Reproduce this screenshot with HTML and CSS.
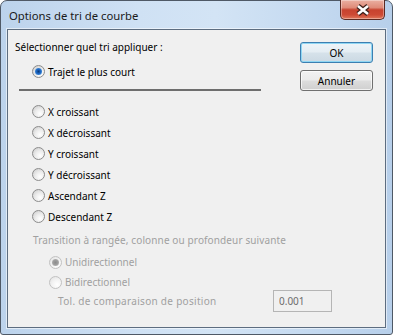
FILE: index.html
```html
<!DOCTYPE html>
<html lang="fr">

<head>
    <meta charset="UTF-8">
    <meta name="viewport" content="width=device-width, initial-scale=1.0">
    <title>Options de tri de courbe</title>
    <link rel="stylesheet" href="styles.css">
</head>

<body>

    <div class="window">
        <!-- Title Bar -->
        <div class="titlebar">
            <span class="title">Options de tri de courbe</span>
            <button class="close-btn" aria-label="Fermer">
                <svg width="16" height="12" viewBox="0 0 16 12">
                    <path d="M3 2 L13 10 M13 2 L3 10" stroke="#3b1f1a" stroke-width="5" />
                    <path d="M3 2 L13 10 M13 2 L3 10" stroke="#ffffff" stroke-width="2.6" />
                </svg>
            </button>
        </div>

        <!-- Dialog Body -->
        <div class="client">
            <div class="top">
                <div class="top-left">
                    <div class="heading">Sélectionner quel tri appliquer :</div>
                    <label class="row opt trajet"><span class="radio checked"></span>Trajet le plus court</label>
                    <div class="sep"></div>
                </div>
                <div class="buttons">
                    <button class="btn default">OK</button>
                    <button class="btn">Annuler</button>
                </div>
            </div>

            <div class="options">
                <label class="row opt"><span class="radio"></span>X croissant</label>
                <label class="row opt"><span class="radio"></span>X décroissant</label>
                <label class="row opt"><span class="radio"></span>Y croissant</label>
                <label class="row opt"><span class="radio"></span>Y décroissant</label>
                <label class="row opt"><span class="radio"></span>Ascendant Z</label>
                <label class="row opt"><span class="radio"></span>Descendant Z</label>
            </div>

            <div class="row transition disabled">Transition à rangée, colonne ou profondeur suivante</div>
            <label class="row sub uni disabled"><span class="radio checked"></span>Unidirectionnel</label>
            <label class="row sub bi disabled"><span class="radio"></span>Bidirectionnel</label>
            <div class="row tol disabled">
                <span class="tol-label">Tol. de comparaison de position</span>
                <input class="tol-input" type="text" value="0.001" disabled>
            </div>
        </div>
    </div>

</body>

</html>
```
FILE: styles.css
```css
/* General Styles */
body {
    margin: 0;
    padding: 0;
    font-family: "Noto Sans", sans-serif;
    font-size: 10px;
    color: #000;
}

/* Window Frame */
.window {
    width: 393px;
    height: 335px;
    box-sizing: border-box;
    border: 1px solid #4f5966;
    border-radius: 7px 7px 3px 3px;
    background: linear-gradient(to right, #bcd3ec 0%, #cfe1f4 35%, #d3e4f5 55%, #c1d7ef 85%, #b7cfea 100%);
    display: flex;
    flex-direction: column;
}

.titlebar {
    height: 28px;
    display: flex;
    align-items: center;
    padding-left: 8px;
    flex: none;
}

.title {
    font-size: 11.3px;
    color: #1a1a1a;
}

.close-btn {
    align-self: flex-start;
    margin: -1px 7px 0 auto;
    width: 45px;
    height: 20px;
    padding: 0;
    border: 1px solid #5b2a22;
    border-top: none;
    border-radius: 0 0 5px 5px;
    background: linear-gradient(#eab0a2 0%, #df8b79 40%, #c7432f 52%, #cd4a35 78%, #e0785c 100%);
    box-shadow: inset 0 0 0 1px rgba(255, 255, 255, 0.35);
    display: flex;
    align-items: center;
    justify-content: center;
}

/* Client Area */
.client {
    flex: 1;
    margin: 0 6px 6px 6px;
    border: 1px solid #5d6d80;
    box-shadow: 0 0 0 1px rgba(255, 255, 255, 0.55);
    background-color: #f0f0f0;
    padding: 7px 0 0 7px;
}

.top {
    display: flex;
    justify-content: space-between;
    padding-right: 12px;
}

.heading {
    height: 20px;
    display: flex;
    align-items: center;
}

.row {
    height: 21px;
    display: flex;
    align-items: center;
}

.opt {
    padding-left: 17px;
}

.trajet {
    margin-top: 4px;
}

.sep {
    margin: 7px 0 0 4px;
    width: 242px;
    height: 2px;
    background-color: #6e6e6e;
}

/* Buttons */
.buttons {
    display: flex;
    flex-direction: column;
    gap: 7px;
    margin-top: 5px;
}

.btn {
    width: 73px;
    height: 21px;
    padding: 0;
    font-family: "Noto Sans", sans-serif;
    font-size: 10px;
    color: #000;
    border: 1px solid #707070;
    border-radius: 3px;
    background: linear-gradient(#f2f2f2 0%, #ebebeb 48%, #dddddd 52%, #cfcfcf 100%);
    box-shadow: inset 0 0 0 1px rgba(255, 255, 255, 0.7);
}

.btn.default {
    border-color: #3c7fb1;
    background: linear-gradient(#eef4f8 0%, #e4edf3 48%, #d6e2ea 52%, #cbd9e3 100%);
    box-shadow: inset 0 0 0 1px #8fd6f3;
}

/* Options */
.options {
    margin-top: 10px;
}

.radio {
    width: 13px;
    height: 13px;
    box-sizing: border-box;
    border-radius: 50%;
    border: 1px solid #8c8c8c;
    background: radial-gradient(circle at 65% 70%, #ffffff 0%, #ececec 45%, #c8c8c8 100%);
    margin-right: 3px;
    position: relative;
    flex: none;
}

.radio.checked::after {
    content: "";
    position: absolute;
    top: 2px;
    left: 2px;
    width: 7px;
    height: 7px;
    border-radius: 50%;
    background: radial-gradient(circle at 50% 50%, #0b3b78 0%, #1a62bf 40%, #62acea 100%);
}

.disabled {
    color: #a0a0a0;
}

.disabled .radio {
    border-color: #c2c2c2;
    background: radial-gradient(circle at 65% 70%, #ffffff 0%, #f2f2f2 50%, #dedede 100%);
}

.disabled .radio.checked::after {
    background: radial-gradient(circle at 50% 50%, #8c8c8c 0%, #9d9d9d 45%, #c6c6c6 100%);
}

.transition {
    margin-top: 2px;
    padding-left: 18px;
    letter-spacing: 0.12px;
}

.sub {
    height: 20px;
    padding-left: 34px;
}

.uni {
    margin-top: 2px;
}

.tol {
    height: 22px;
    margin-top: -2px;
    padding-left: 43px;
}

.tol-label {
    width: 215px;
    letter-spacing: 0.3px;
}

.tol-input {
    width: 59px;
    height: 22px;
    box-sizing: border-box;
    border: 1px solid #b5b5b5;
    background-color: #f0f0f0;
    font-family: "Noto Sans", sans-serif;
    font-size: 10px;
    color: #6d6d6d;
    padding: 0 0 0 5px;
}
```
